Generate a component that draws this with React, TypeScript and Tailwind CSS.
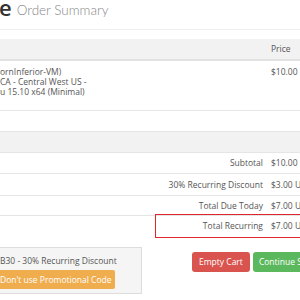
const rows = [
  { label: "Subtotal", value: "$10.00 USD", h: "h-[21px]" },
  { label: "30% Recurring Discount", value: "$3.00 USD", h: "h-[22px]" },
  { label: "Total Due Today", value: "$7.00 USD", h: "h-[20px]" },
];

export default function App() {
  return (
    <div className="w-[300px] h-[300px] overflow-hidden bg-white relative font-['Open_Sans',sans-serif] text-[#555] text-[8.5px] leading-[10px]">
      <div className="w-[380px]">
        <div className="h-[30px] flex items-end pb-[11px] gap-[5px] border-b border-[#eee]">
          <span className="text-[22px] leading-[22px] font-semibold text-[#333] -ml-[1px]">e</span>
          <span className="text-[13.5px] leading-[15px] font-['Lato',sans-serif] font-light text-[#888]">Order Summary</span>
        </div>

        <div className="mt-[9px] h-[22px] bg-[#f2f2f2] border-b-2 border-[#e2e2e2] flex items-center">
          <div className="w-[271px]" />
          <div>Price</div>
        </div>

        <div className="h-[50px] border-b border-[#e5e5e5] flex pt-[6px]">
          <div className="w-[271px] flex flex-col">
            <span>ornInferior-VM)</span>
            <span>CA - Central West US -</span>
            <span>u 15.10 x64 (Minimal)</span>
          </div>
          <div>$10.00</div>
        </div>

        <div className="h-[21px] border-b border-[#e5e5e5]" />
        <div className="h-[21px] bg-[#f2f2f2] border-b border-[#e5e5e5]" />

        {rows.map((r) => (
          <div key={r.label} className={`${r.h} border-b border-[#e5e5e5] flex items-center`}>
            <div className="w-[263px] text-right">{r.label}</div>
            <div className="ml-[8px]">{r.value}</div>
          </div>
        ))}

        <div className="ml-[155px] -mt-[2px] h-[24px] border border-[#e0262b] flex items-center">
          <div className="w-[107px] text-right">Total Recurring</div>
          <div className="ml-[8px]">$7.00 USD</div>
        </div>

        <div className="flex mt-[9px]">
          <div className="w-[142px] h-[47px] bg-[#f5f5f5] border border-[#ddd] border-l-0 pt-[8px]">
            <div className="whitespace-nowrap">B30 - 30% Recurring Discount</div>
            <div className="mt-[4px] w-[115px] h-[19px] bg-[#f0ad4e] text-white rounded-r-[2px] flex items-center whitespace-nowrap">
              Don't use Promotional Code
            </div>
          </div>
          <div className="ml-[50px] mt-[5px] flex gap-[3px]">
            <button className="h-[20px] px-[7px] bg-[#d9534f] text-white rounded-[3px] whitespace-nowrap">Empty Cart</button>
            <button className="h-[20px] px-[6px] bg-[#5cb85c] text-white rounded-[3px] whitespace-nowrap">Continue Shopping</button>
          </div>
        </div>
      </div>
    </div>
  );
}
